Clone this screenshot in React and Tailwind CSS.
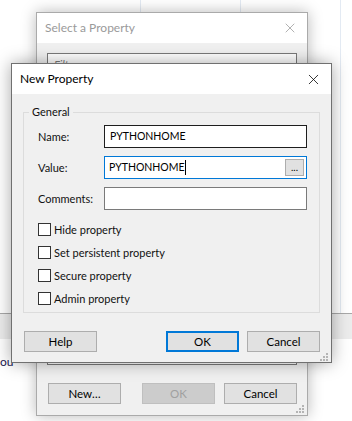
import { X } from 'lucide-react'

function Grip() {
    return (
        <svg width="10" height="10" viewBox="0 0 10 10" className="block">
            <rect x="7" y="1" width="2" height="2" fill="#b4b4b4" />
            <rect x="4" y="4" width="2" height="2" fill="#b4b4b4" />
            <rect x="7" y="4" width="2" height="2" fill="#b4b4b4" />
            <rect x="1" y="7" width="2" height="2" fill="#b4b4b4" />
            <rect x="4" y="7" width="2" height="2" fill="#b4b4b4" />
            <rect x="7" y="7" width="2" height="2" fill="#b4b4b4" />
        </svg>
    )
}

function Button({ children, focused, disabled, className = '' }) {
    const base = 'flex items-center justify-center h-[21px] w-[73px] text-[11.5px]'
    if (disabled) {
        return <div className={`${base} bg-[#cccccc] border border-[#bfbfbf] text-[#a0a0a0] ${className}`}>{children}</div>
    }
    if (focused) {
        return <div className={`${base} bg-[#e1e1e1] border-2 border-[#0078d7] text-black ${className}`}>{children}</div>
    }
    return <div className={`${base} bg-[#e1e1e1] border border-[#adadad] text-black ${className}`}>{children}</div>
}

function Check({ label }) {
    return (
        <div className="flex items-center h-[23px] gap-[3px]">
            <div className="w-[13px] h-[13px] border border-[#333] bg-white" />
            <span className="text-[#111]">{label}</span>
        </div>
    )
}

export default function App() {
    return (
        <div className="relative w-[352px] h-[421px] overflow-hidden bg-white text-[11px] text-black font-['Lato',sans-serif] leading-none">
            {/* background app table */}
            <div className="flex h-[313px]">
                <div className="w-[141px] border-r border-[#e3eaf3]" />
                <div className="w-[100px] border-r border-[#e3eaf3]" />
                <div className="w-[100px] border-r border-[#e3eaf3]" />
                <div className="flex-1" />
            </div>
            <div className="h-[26px] bg-[#ececec] border-t border-[#a8a8a8]" />
            <div className="pt-[17px] text-[12px] text-[#1c1650]">ou</div>

            {/* back dialog: Select a Property */}
            <div className="absolute left-[36px] top-[12px] w-[272px] h-[404px] flex flex-col bg-[#f0f0f0] border border-[#aaaaaa] shadow-[0_0_14px_rgba(0,0,0,0.28)]">
                <div className="h-[30px] bg-white flex items-center justify-between pl-[8px] pr-[9px] shrink-0">
                    <span className="text-[#9a9a9a] text-[12px]">Select a Property</span>
                    <X size={16} strokeWidth={1} color="#8a8a8a" />
                </div>
                <div className="flex-1 flex flex-col px-[10px] pt-[10px]">
                    <div className="h-[312px] border border-[#7a7a7a] bg-white">
                        <div className="h-[20px] flex items-center pl-[6px] italic text-[#7a7a7a]">Filter</div>
                    </div>
                    <div className="flex items-center mt-[18px] pl-[1px]">
                        <Button>New…</Button>
                        <Button disabled className="ml-[21px]">OK</Button>
                        <Button className="ml-[9px]">Cancel</Button>
                    </div>
                    <div className="flex justify-end mt-auto mb-[1px] -mr-[8px]">
                        <Grip />
                    </div>
                </div>
            </div>

            {/* front dialog: New Property */}
            <div className="absolute left-[11px] top-[63px] w-[321px] h-[300px] flex flex-col bg-[#f0f0f0] border border-[#707070] shadow-[0_0_16px_rgba(0,0,0,0.35)]">
                <div className="h-[30px] bg-white flex items-center justify-between pl-[8px] pr-[9px] shrink-0">
                    <span className="text-[12px] text-black">New Property</span>
                    <X size={17} strokeWidth={1.1} color="#000" />
                </div>
                <div className="flex-1 flex flex-col px-[11px] pt-[18px]">
                    <div className="relative h-[201px] border border-[#dcdcdc] pl-[14px] pt-[12px]">
                        <div className="absolute left-[5px] -top-[7px] bg-[#f0f0f0] px-[3px] text-[#111]">General</div>
                        <div className="flex flex-col gap-[8px]">
                            <div className="flex items-center">
                                <span className="w-[66px] text-[#111]">Name:</span>
                                <div className="w-[203px] h-[23px] border border-[#1e1e1e] bg-white flex items-center pl-[5px] text-[10.5px]">PYTHONHOME</div>
                            </div>
                            <div className="flex items-center">
                                <span className="w-[66px] text-[#111]">Value:</span>
                                <div className="w-[203px] h-[23px] border border-[#0078d7] bg-white flex items-center pl-[4px] text-[10.5px]">
                                    <span>PYTHONHOME</span>
                                    <span className="w-[1px] h-[15px] bg-black" />
                                    <div className="ml-auto mr-[2px] w-[19px] h-[17px] bg-[#e1e1e1] border border-[#adadad] flex items-end justify-center pb-[3px] text-[10px]">...</div>
                                </div>
                            </div>
                            <div className="flex items-center">
                                <span className="w-[66px] text-[#111]">Comments:</span>
                                <div className="w-[203px] h-[23px] border border-[#7a7a7a] bg-white" />
                            </div>
                        </div>
                        <div className="flex flex-col mt-[8px]">
                            <Check label="Hide property" />
                            <Check label="Set persistent property" />
                            <Check label="Secure property" />
                            <Check label="Admin property" />
                        </div>
                    </div>
                    <div className="flex items-center mt-[18px] pl-[1px]">
                        <Button>Help</Button>
                        <Button focused className="ml-[69px]">OK</Button>
                        <Button className="ml-[8px]">Cancel</Button>
                    </div>
                    <div className="flex justify-end mt-auto mb-[1px] -mr-[9px]">
                        <Grip />
                    </div>
                </div>
            </div>
        </div>
    )
}
